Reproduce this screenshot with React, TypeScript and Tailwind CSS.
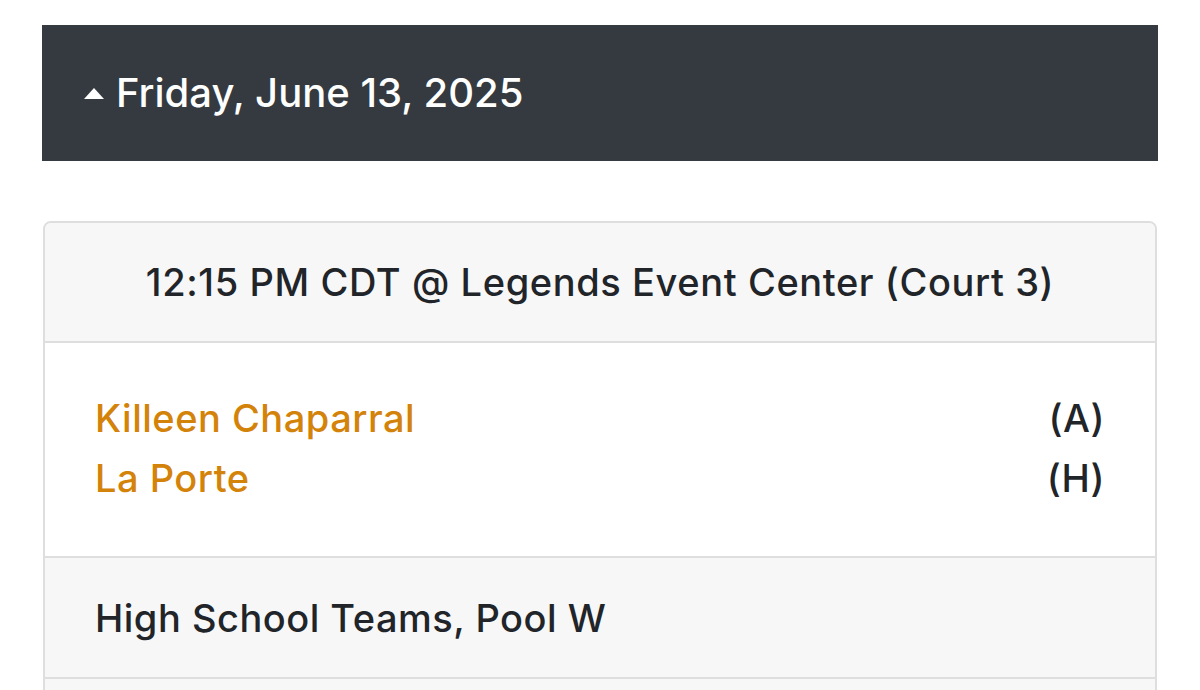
export default function App() {
  return (
    <div
      className="min-h-[690px] bg-white px-[42px] pt-[25px] text-[#212529]"
      style={{ fontFamily: "Inter, 'Noto Sans', sans-serif" }}
    >
      <div className="flex h-[136px] items-center bg-[#343a40] pl-[42px] text-white">
        <svg width="20" height="11" viewBox="0 0 20 11" className="mr-[12px] mt-[1px]">
          <path d="M10 0 L20 11 L0 11 Z" fill="white" />
        </svg>
        <span className="text-[40px] font-medium leading-[48px]">Friday, June 13, 2025</span>
      </div>

      <div className="mx-px mt-[60px] overflow-hidden rounded-[8px] border-2 border-[#dedede]">
        <div className="flex h-[120px] items-center justify-center border-b-2 border-[#dedede] bg-[#f7f7f7]">
          <span className="text-[38px] font-medium leading-[46px] tracking-[0.6px]">
            12:15 PM CDT @ Legends Event Center (Court 3)
          </span>
        </div>

        <div className="flex h-[213px] flex-col gap-[14px] px-[50px] pt-[52px] text-[38px] font-medium leading-[46px] tracking-[0.5px]">
          <div className="flex items-center justify-between">
            <span className="text-[#d4830a]">Killeen Chaparral</span>
            <span>(A)</span>
          </div>
          <div className="flex items-center justify-between">
            <span className="text-[#d4830a]">La Porte</span>
            <span>(H)</span>
          </div>
        </div>

        <div className="flex h-[123px] items-center border-t-2 border-b-2 border-[#dedede] bg-[#f7f7f7] px-[50px]">
          <span className="text-[38px] font-medium leading-[46px] tracking-[0.5px]">
            High School Teams, Pool W
          </span>
        </div>
        <div className="h-[40px] bg-[#f7f7f7]" />
      </div>
    </div>
  );
}
